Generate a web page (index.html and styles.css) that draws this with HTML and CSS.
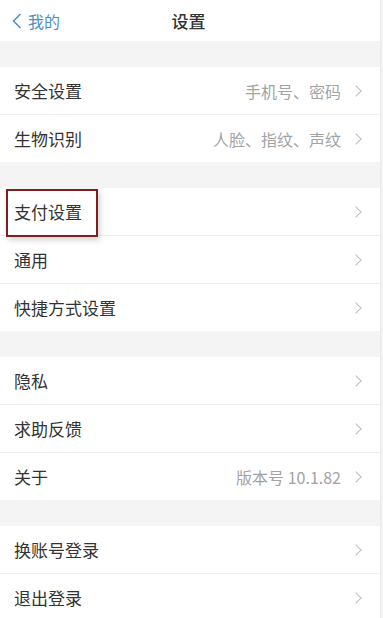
FILE: index.html
```html
<!DOCTYPE html>
<html lang="zh-CN">

<head>
    <meta charset="UTF-8">
    <meta name="viewport" content="width=device-width, initial-scale=1.0">
    <title>设置</title>
    <link rel="stylesheet" href="styles.css">
</head>

<body>
    <div class="page">
        <div class="nav">
            <a class="back">
                <svg class="back-icon" width="10" height="18" viewBox="0 0 10 18">
                    <path d="M8.5 2 L1.5 9 L8.5 16" fill="none" stroke="#4f8fc4" stroke-width="1.5" />
                </svg>
                <span>我的</span>
            </a>
            <div class="title">设置</div>
        </div>

        <ul class="group">
            <li class="row"><span class="label">安全设置</span><span class="value">手机号、密码</span><i class="arrow"></i></li>
            <li class="row"><span class="label">生物识别</span><span class="value">人脸、指纹、声纹</span><i class="arrow"></i></li>
        </ul>

        <ul class="group">
            <li class="row mark-row">
                <span class="label">支付设置</span><i class="arrow"></i>
                <div class="mark"></div>
            </li>
            <li class="row"><span class="label">通用</span><i class="arrow"></i></li>
            <li class="row"><span class="label">快捷方式设置</span><i class="arrow"></i></li>
        </ul>

        <ul class="group">
            <li class="row"><span class="label">隐私</span><i class="arrow"></i></li>
            <li class="row"><span class="label">求助反馈</span><i class="arrow"></i></li>
            <li class="row"><span class="label">关于</span><span class="value">版本号 10.1.82</span><i class="arrow"></i></li>
        </ul>

        <ul class="group">
            <li class="row"><span class="label">换账号登录</span><i class="arrow"></i></li>
            <li class="row"><span class="label">退出登录</span><i class="arrow"></i></li>
        </ul>
    </div>
</body>

</html>
```

FILE: styles.css
```css
body,
ul,
li {
    padding: 0;
    margin: 0;
    list-style: none;
}

body {
    background: #f2f2f2;
    font-family: "Noto Sans CJK SC", "Noto Sans", sans-serif;
    overflow: hidden;
}

.page {
    width: 380px;
    min-height: 618px;
    background: #f4f4f4;
    border-right: 1px solid #ebebeb;
}

/* 顶部导航 */
.nav {
    position: relative;
    height: 41px;
    display: flex;
    align-items: center;
    justify-content: center;
    background: #fff;
}

.back {
    position: absolute;
    left: 12px;
    top: 0;
    height: 41px;
    display: flex;
    align-items: center;
    gap: 6px;
    color: #4f8fc4;
    font-size: 16px;
}

.title {
    font-size: 17px;
    color: #333;
    font-weight: 500;
    margin-left: -3px;
}

/* 列表分组 */
.group {
    margin-top: 26px;
    background: #fff;
}

.row {
    position: relative;
    display: flex;
    align-items: center;
    height: 47px;
    padding: 0 18px 0 14px;
    border-bottom: 1px solid #efefef;
    font-size: 17px;
    color: #333;
}

.row:last-child {
    border-bottom: none;
}

.label {
    flex: 1;
}

.value {
    font-size: 16px;
    color: #a3a3a3;
    margin-right: 11px;
}

.arrow {
    width: 7px;
    height: 7px;
    border-top: 1px solid #bdbdbd;
    border-right: 1px solid #bdbdbd;
    transform: rotate(45deg);
    margin-right: 2px;
}

/* 红框标注 */
.mark {
    position: absolute;
    left: 6px;
    top: 1px;
    width: 88px;
    height: 44px;
    border: 2px solid #7d1f22;
    box-shadow: 2px 3px 6px rgba(0, 0, 0, 0.18);
}
```
